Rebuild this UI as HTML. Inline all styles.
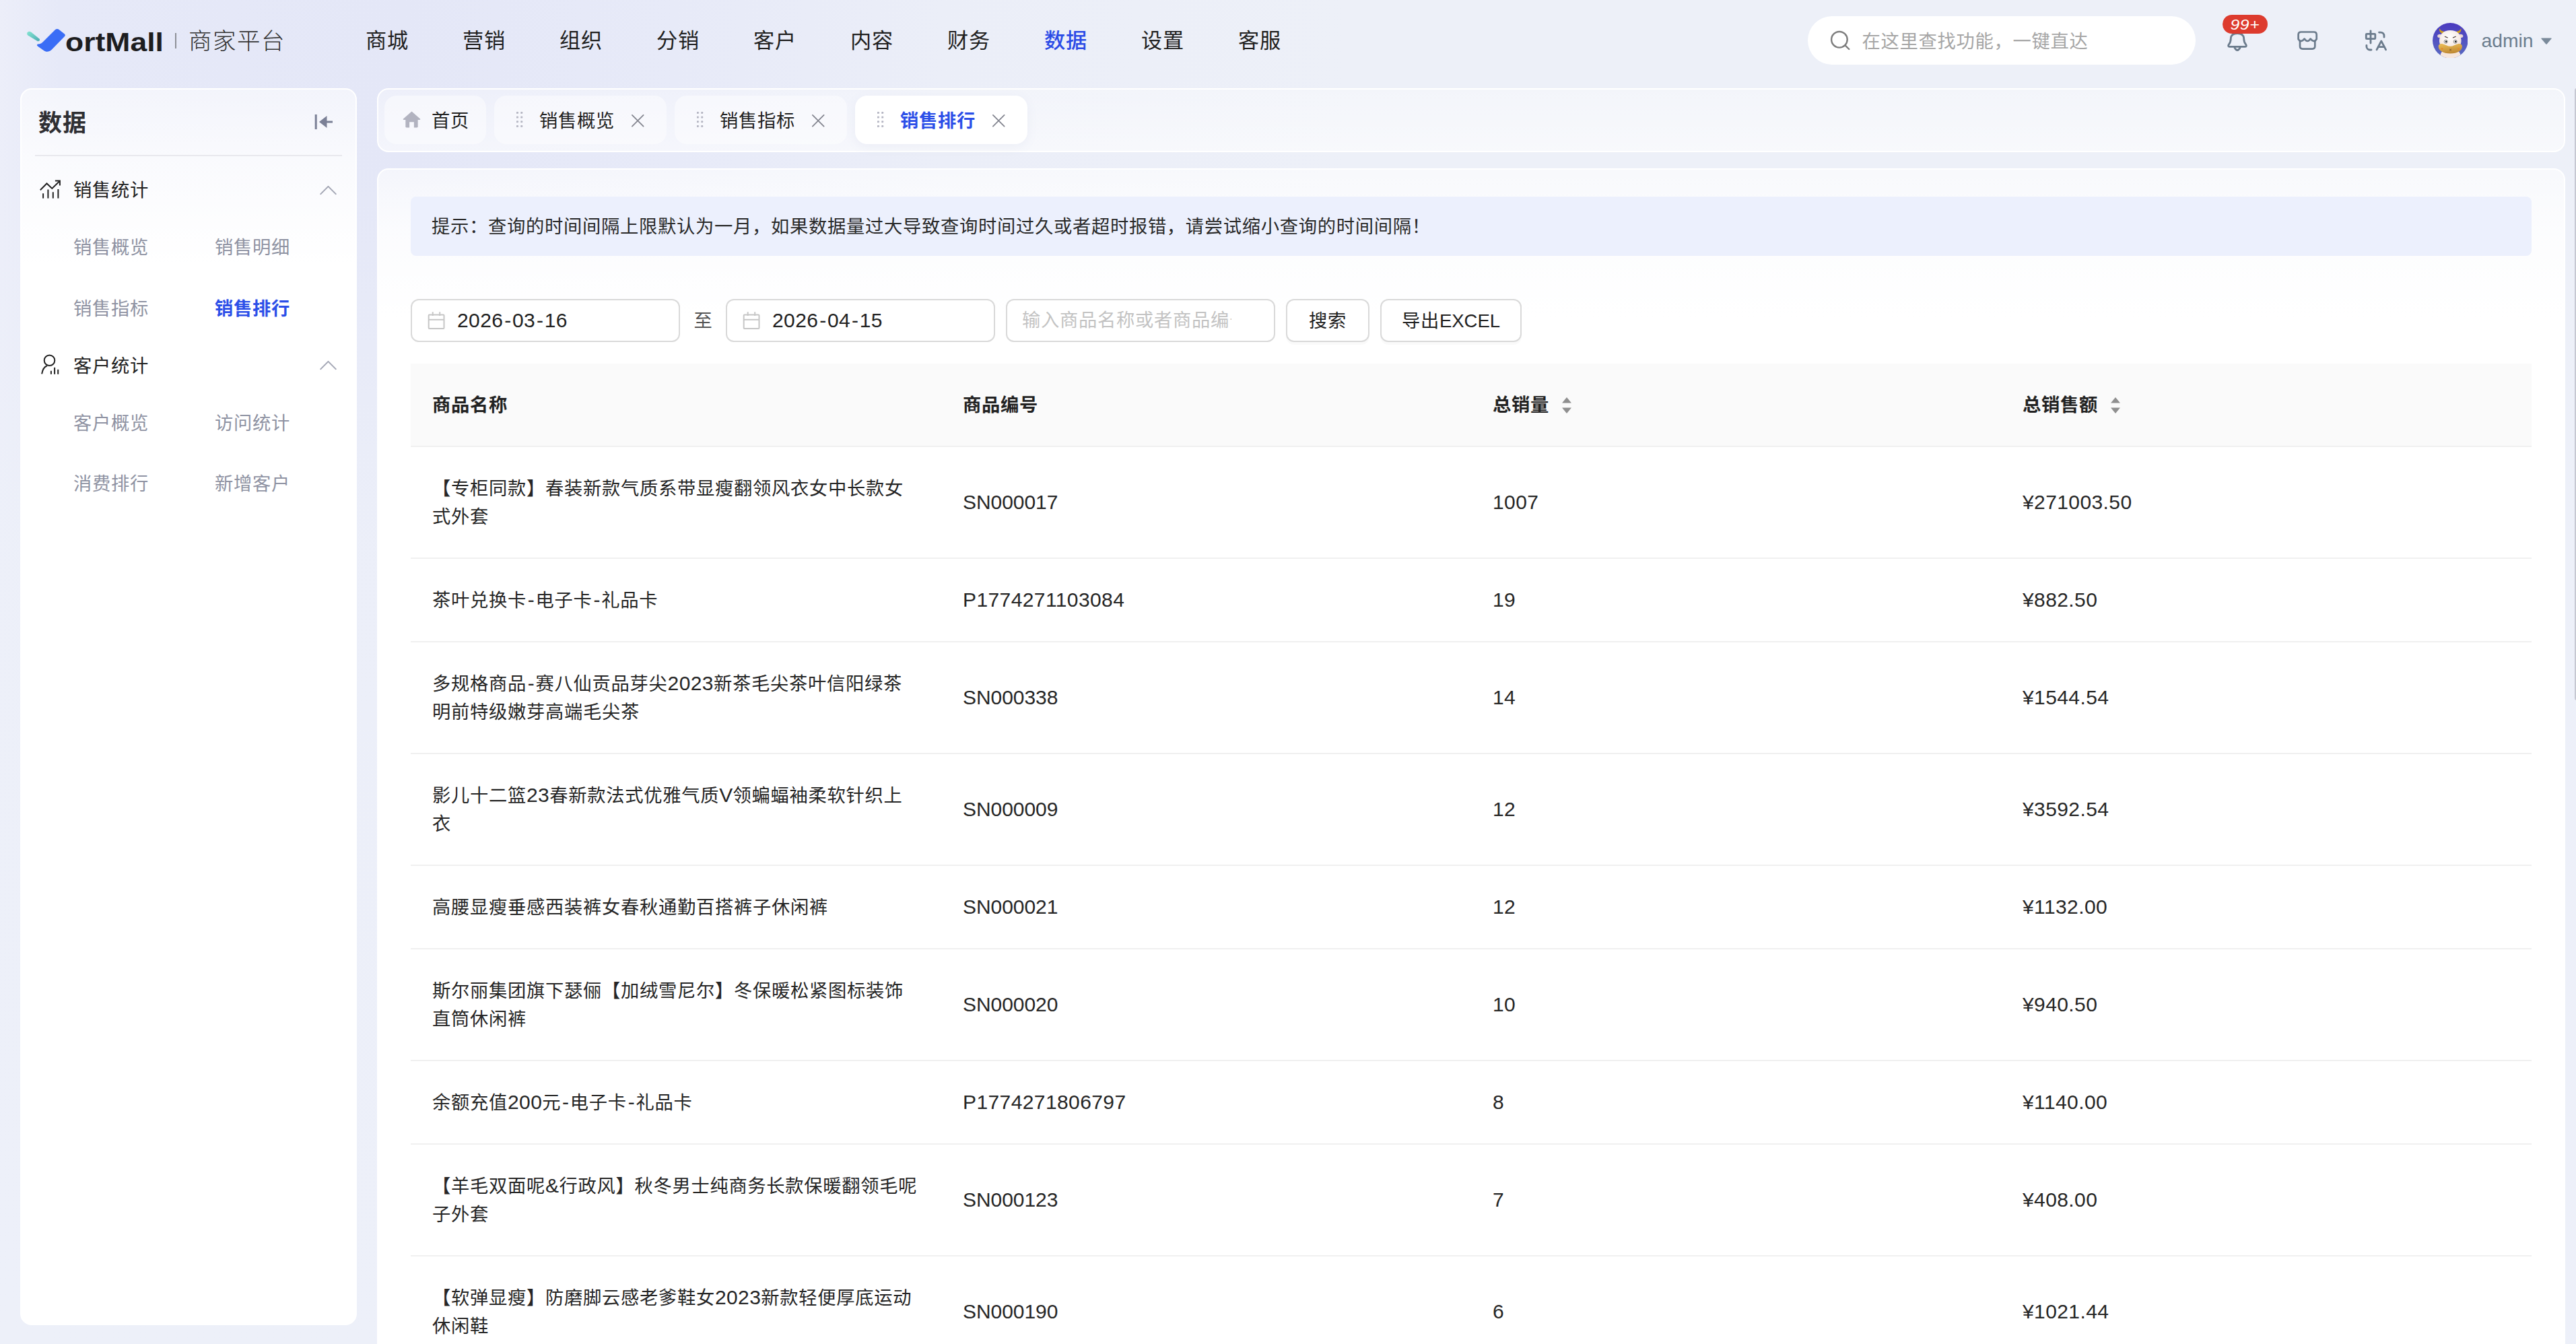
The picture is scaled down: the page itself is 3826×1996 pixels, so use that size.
<!DOCTYPE html>
<html lang="zh-CN">
<head>
<meta charset="utf-8">
<title>销售排行 - 商家平台</title>
<style>
*{box-sizing:border-box;margin:0;padding:0}
html,body{width:3826px;height:1996px;overflow:hidden}
body{position:relative;font-family:"Liberation Sans","Noto Sans CJK SC",sans-serif;color:#222;
background:linear-gradient(180deg,rgba(237,240,249,0) 0,rgba(237,240,249,0) 240px,rgba(237,240,249,.85) 800px,rgba(237,240,249,1) 100%),linear-gradient(90deg,#eceef9 0,#e6e9f8 90px,#e4e7f7 600px,#e7eaf8 1000px,#ebeef8 1400px,#edf0f8 2000px,#edf0f8 100%);}
.abs{position:absolute}
/* header */
#logo-t{left:96.500px;top:33.500px;font-size:39.500px;font-weight:700;line-height:56px;color:#1d1d1f;white-space:nowrap;transform-origin:0 50%;transform:scaleX(1.127)}
#logo-sep{left:260px;top:49px;width:2px;height:23px;background:#8d8f96}
#logo-c{left:280px;top:33px;font-size:34.500px;letter-spacing:1.500px;font-weight:300;line-height:56px;color:#333;white-space:nowrap}
.nav{top:36px;font-size:31.200px;letter-spacing:.800px;line-height:50px;color:#1f1f1f;white-space:nowrap}
.nav.on{color:#2b4be6;font-weight:500}
#search{left:2685px;top:24px;width:576px;height:72px;border-radius:36px;background:#fff}
#search span{position:absolute;left:80.500px;top:18px;font-size:27.300px;letter-spacing:.700px;line-height:40px;color:#a6a6a6;white-space:nowrap}
#badge{left:3301px;top:21.500px;width:67px;height:28.500px;border-radius:14.250px;background:#dd3b2e;color:#fff;font-size:22px;line-height:30px;text-align:center;font-style:italic;letter-spacing:.5px}
#badge span{display:inline-block;transform:scaleX(1.130)}
#admin{left:3685.500px;top:40px;font-size:28.300px;line-height:40px;color:#6b7d8e}
/* panels */
.panel{border:2px solid #fff;border-radius:17px}
#side{left:30px;top:131px;width:500px;height:1837px;background:linear-gradient(180deg,rgba(255,255,255,.55) 0,rgba(255,255,255,.8) 110px,#fff 260px)}
#side-title{left:57px;top:157px;font-size:35px;letter-spacing:1px;font-weight:700;line-height:52px;color:#2f2f33}
#side-div{left:52px;top:230px;width:456px;height:2px;background:#e9e9ee}
.m1{font-size:27.300px;letter-spacing:.700px;line-height:40px;color:#222;white-space:nowrap}
.m2{font-size:27.300px;letter-spacing:.700px;line-height:40px;color:#8f93a3;white-space:nowrap}
.m2.on{color:#2c4fe8;font-weight:700}
#tabs{left:560px;top:131px;width:3250px;height:95px;background:linear-gradient(180deg,rgba(255,255,255,.35),rgba(255,255,255,.6))}
.tab{top:142px;height:71.500px;border-radius:18px;background:rgba(255,255,255,.45);font-size:27.300px;letter-spacing:.700px;line-height:75px;color:#222;white-space:nowrap}
.tab.on{background:#fff;color:#2c4fe8;font-weight:700;box-shadow:0 4px 16px rgba(120,130,180,.08)}
.tab span{position:absolute;top:0}
.tab .dots{top:24px;width:10px;height:24px;background:radial-gradient(circle at 1.500px 1.500px,#b4b5c2 1.400px,transparent 1.800px) 0 0/6.300px 6.670px}
#main{left:560px;top:250px;width:3250px;height:1800px;border-bottom-left-radius:0;border-bottom-right-radius:0;background:linear-gradient(180deg,rgba(255,255,255,.6) 0px,rgba(255,255,255,.85) 90px,#fff 220px)}
#hint{left:610px;top:292px;width:3150px;height:88px;border-radius:8px;background:#ecf0fd;font-size:27.300px;letter-spacing:.700px;line-height:90px;padding-left:31px;color:#2a2a2a;white-space:nowrap}
.inp{top:444px;height:64px;width:400px;border:2px solid #d9d9d9;border-radius:12px;background:#fff;font-size:27.300px;letter-spacing:.700px;line-height:60px;color:#222;white-space:nowrap}
.inp span{position:absolute;top:0}
.num{font-size:30px!important;letter-spacing:.4px!important}
.num.sn{letter-spacing:-.050px!important}
i{font-style:normal;font-size:30px;letter-spacing:0;margin:0 1.800px;line-height:0}
b{font-weight:inherit;font-size:30px;letter-spacing:.4px;line-height:0}
.btn{top:444px;height:64px;border:2px solid #d9d9d9;border-radius:12px;background:#fff;font-size:27.300px;letter-spacing:.700px;line-height:61px;text-align:center;color:#222;box-shadow:0 4px 0 rgba(0,0,0,.02);white-space:nowrap}
/* table */
#thead{left:610px;top:540px;width:3150px;height:124px;background:#fafafa;border-bottom:2px solid #f0f0f0}
.th{top:581px;font-size:27.300px;letter-spacing:.700px;font-weight:700;line-height:42px;color:#222;white-space:nowrap}
.row{left:610px;width:3150px;border-bottom:2px solid #f0f0f0}
.row div{position:absolute;font-size:27.300px;letter-spacing:.700px;line-height:42px;color:#262626;white-space:nowrap}
.c1{left:32px;top:41px}
.c2{left:820px}.c3{left:1607px}.c4{left:2394px}
.r1{height:124px}.r1 .c2,.r1 .c3,.r1 .c4{top:40px}
.r2{height:166px}.r2 .c2,.r2 .c3,.r2 .c4{top:61px}
</style>
</head>
<body>
<!-- HEADER -->
<svg class="abs" style="left:36px;top:38px" width="66" height="44" viewBox="0 0 66 44">
 <defs><linearGradient id="lg1" x1="0" y1="0" x2="1" y2="1"><stop offset="0" stop-color="#86e6d2"/><stop offset="1" stop-color="#4aaab2"/></linearGradient></defs>
 <path d="M4.700 10.200 C6 8.300 8.300 8.200 10 9.500 L22.300 19.500 C24.300 21.200 22 24.200 19.500 22.900 L5.800 14.800 C3.900 13.600 3.700 11.700 4.700 10.200Z" fill="url(#lg1)"/>
 <path d="M45.800 6.200 C47.800 4.600 50 4.600 52 6.200 L59.600 12.300 C61.200 13.600 61.200 14.800 59.800 16.300 L40.500 36 C37 39.200 32.500 39.800 29 37 L19.800 30.500 C18.200 29.200 19 27.800 20.800 27.600 C24 27.400 26 26 28 24Z" fill="#3a6df6"/>
</svg>
<div class="abs" id="logo-t">ortMall</div>
<div class="abs" id="logo-sep"></div>
<div class="abs" id="logo-c">商家平台</div>

<div class="abs nav" style="left:543px">商城</div>
<div class="abs nav" style="left:687px">营销</div>
<div class="abs nav" style="left:831px">组织</div>
<div class="abs nav" style="left:975px">分销</div>
<div class="abs nav" style="left:1119px">客户</div>
<div class="abs nav" style="left:1263px">内容</div>
<div class="abs nav" style="left:1407px">财务</div>
<div class="abs nav on" style="left:1551px">数据</div>
<div class="abs nav" style="left:1695px">设置</div>
<div class="abs nav" style="left:1839px">客服</div>

<div class="abs" id="search">
 <svg class="abs" style="left:32px;top:20px" width="34" height="34" viewBox="0 0 34 34" fill="none" stroke="#7d7d7d" stroke-width="2.400" stroke-linecap="round"><circle cx="14.900" cy="14.800" r="11.800"/><path d="M23.500 23.400 L29.300 29"/></svg>
 <span>在这里查找功能，一键直达</span>
</div>
<!-- bell -->
<svg class="abs" style="left:3303px;top:43px" width="40" height="40" viewBox="0 0 40 40" fill="none" stroke="#6b7b8c" stroke-width="2.800" stroke-linecap="round" stroke-linejoin="round"><path d="M8.500 26.300 C6.300 26.300 6.200 24.600 7.300 23.200 C9.600 20.200 10.300 17.500 10.300 14.500 C10.300 9 14.500 6.500 20 6.500 C25.500 6.500 29.700 9 29.700 14.500 C29.700 17.500 30.400 20.200 32.700 23.200 C33.800 24.600 33.700 26.300 31.500 26.300 Z"/><path d="M16 28 Q20 35 24 28"/></svg>
<div class="abs" id="badge"><span>99+</span></div>
<!-- store -->
<svg class="abs" style="left:3410px;top:44px" width="36" height="34" viewBox="0 0 36 34" fill="none" stroke="#6b7b8c" stroke-width="2.700" stroke-linejoin="round" stroke-linecap="round"><path d="M3.600 14 V7.500 Q3.600 3.500 7.600 3.500 H26.700 Q30.700 3.500 30.700 7.500 V14 Q28.500 17.800 25.800 16.800 Q23.500 16 21.700 13.600 Q19.500 17 17.150 17 Q14.800 17 12.600 13.600 Q10.800 16 8.500 16.800 Q5.800 17.800 3.600 14 Z"/><path d="M6 17 V24.500 Q6 28.600 10 28.600 H24.300 Q28.300 28.600 28.300 24.500 V17"/></svg>
<!-- translate -->
<svg class="abs" style="left:3510px;top:42px" width="38" height="36" viewBox="0 0 38 36" fill="none" stroke="#6b7b8c" stroke-width="2.800" stroke-linecap="round" stroke-linejoin="round"><rect x="4.300" y="8.300" width="13.500" height="7.400" rx="1"/><path d="M11 3.800 V22"/><path d="M23.500 6.100 H26 a5 5 0 0 1 5 5 V13.200"/><path d="M4.900 25.300 V27 a5 5 0 0 0 5 5 H12"/><path d="M20 31.800 L26.800 18.900 L33.600 31.800"/><path d="M22.500 27.600 H31.100"/></svg>
<!-- avatar -->
<svg class="abs" style="left:3612.800px;top:33.700px" width="52.500" height="52.500" viewBox="0 0 52.500 52.500">
 <defs><clipPath id="avc"><circle cx="26.250" cy="26.250" r="26.250"/></clipPath>
 <linearGradient id="avbg" x1="0" y1="0" x2="0" y2="1"><stop offset="0" stop-color="#4a3abf"/><stop offset="1" stop-color="#5a6cc2"/></linearGradient>
 <linearGradient id="avmz" x1="0" y1="0" x2="0.300" y2="1"><stop offset="0" stop-color="#edbf58"/><stop offset="1" stop-color="#c08a34"/></linearGradient>
 <radialGradient id="avhd" cx="0.450" cy="0.350" r="0.750"><stop offset="0" stop-color="#ffffff"/><stop offset="0.700" stop-color="#f6e9e4"/><stop offset="1" stop-color="#e4cfc8"/></radialGradient></defs>
 <circle cx="26.250" cy="26.250" r="26.250" fill="url(#avbg)"/>
 <g clip-path="url(#avc)">
  <path d="M12 55 C10 47 13 42 18 40 H35 C40 42 43 47 41 55 Z" fill="#f6e6dc"/>
  <path d="M16.200 16.200 C11.800 15.600 9.300 12.300 10.200 8 C11.600 11 13.400 12.300 16.800 12.600 Z" fill="#d3a01c"/>
  <path d="M36.300 16.200 C40.700 15.600 43.200 12.300 42.300 8 C40.900 11 39.100 12.300 35.700 12.600 Z" fill="#d3a01c"/>
  <ellipse cx="10.300" cy="19.300" rx="3.200" ry="2.500" fill="#ecd9d4" transform="rotate(-15 10.300 19.300)"/>
  <ellipse cx="42.200" cy="19.300" rx="3.200" ry="2.500" fill="#ecd9d4" transform="rotate(15 42.200 19.300)"/>
  <path d="M26.300 11 C36 11 41.500 16 42.500 25 C43.300 33 38 39.500 26.300 39.500 C14.600 39.500 9.300 33 10.100 25 C11.100 16 16.600 11 26.300 11 Z" fill="url(#avhd)"/>
  <path d="M8.700 35 C8.700 31.500 12 30.700 15 31.200 C19 32 22 34.800 26.300 34.800 C30.600 34.800 33.600 32 37.600 31.200 C40.600 30.700 43.900 31.500 43.900 35 C43.900 41 37 45.500 26.300 45.500 C15.600 45.500 8.700 41 8.700 35 Z" fill="url(#avmz)"/>
  <circle cx="19.600" cy="27.800" r="2.500" fill="#fff" stroke="#444" stroke-width="0.600"/><circle cx="20.100" cy="27.800" r="1.400" fill="#222"/>
  <circle cx="33.700" cy="27.800" r="2.500" fill="#fff" stroke="#444" stroke-width="0.600"/><circle cx="34.200" cy="27.800" r="1.400" fill="#222"/>
  <path d="M18.300 20.300 L22.300 21.900 M34.300 20.300 L30.300 21.900" stroke="#3a2a28" stroke-width="1.100" stroke-linecap="round" fill="none"/>
  <circle cx="14.100" cy="38.400" r="1.300" fill="#e8872a"/><circle cx="38.400" cy="38.400" r="1.300" fill="#e8872a"/>
  <path d="M25.200 38.800 l2.600 2.400 m0 -2.400 l-2.600 2.400" stroke="#5a3420" stroke-width="0.700" fill="none"/>
 </g>
</svg>
<div class="abs" id="admin">admin</div>
<svg class="abs" style="left:3773px;top:55px" width="18" height="12" viewBox="0 0 18 12"><path d="M2 1.500 H16 Q17.200 1.600 16.500 2.600 L9.700 10.600 Q9 11.300 8.300 10.600 L1.500 2.600 Q0.800 1.600 2 1.500 Z" fill="#7a8a9a"/></svg>

<div class="abs" style="left:3824px;top:131px;width:6px;height:909px;border-radius:3px;background:#c6c8d2"></div>
<!-- SIDEBAR -->
<div class="abs panel" id="side"></div>
<div class="abs" id="side-title">数据</div>
<svg class="abs" style="left:466px;top:168px" width="30" height="26" viewBox="0 0 30 26" fill="none" stroke="#7b8096" stroke-width="3" stroke-linecap="butt"><path d="M3.200 2 V24"/><path d="M12 13 H28"/><path d="M8 13 L19.500 4 V22 Z" fill="#7b8096" stroke="none"/></svg>
<div class="abs" id="side-div"></div>

<svg class="abs" style="left:58px;top:266px" width="34" height="32" viewBox="0 0 34 32" fill="none" stroke="#222" stroke-width="2" stroke-linecap="butt" stroke-linejoin="miter"><path d="M1.800 16.200 L11.500 6.500 L19.300 13.900 L30.500 3"/><path d="M23.900 2.600 H30.900 V9.600"/><path d="M6.100 21.300 V28.600 M13.400 15.400 V28.600 M20.800 19.300 V28.600 M28.400 15 V28.600"/></svg>
<div class="abs m1" style="left:109px;top:263px">销售统计</div>
<svg class="abs" style="left:474px;top:275px" width="27" height="15" viewBox="0 0 28 16" fill="none" stroke="#a3a6b4" stroke-width="2.200" stroke-linecap="round" stroke-linejoin="round"><path d="M2 14 L14 2 L26 14"/></svg>
<div class="abs m2" style="left:109px;top:348px">销售概览</div>
<div class="abs m2" style="left:319px;top:348px">销售明细</div>
<div class="abs m2" style="left:109px;top:438.500px">销售指标</div>
<div class="abs m2 on" style="left:319px;top:438.500px">销售排行</div>

<svg class="abs" style="left:58px;top:526px" width="34" height="34" viewBox="0 0 34 34" fill="none" stroke="#222" stroke-width="2" stroke-linecap="butt" stroke-linejoin="round"><circle cx="15.500" cy="9.200" r="7.800"/><path d="M11.800 17.300 C7.500 19 5 23.500 4.100 29.400"/><path d="M17.900 24.800 V29.800 M23.100 19.700 V29.800 M28.200 22.800 V29.800"/></svg>
<div class="abs m1" style="left:109px;top:523.500px">客户统计</div>
<svg class="abs" style="left:474px;top:535px" width="27" height="15" viewBox="0 0 28 16" fill="none" stroke="#a3a6b4" stroke-width="2.200" stroke-linecap="round" stroke-linejoin="round"><path d="M2 14 L14 2 L26 14"/></svg>
<div class="abs m2" style="left:109px;top:608.500px">客户概览</div>
<div class="abs m2" style="left:319px;top:608.500px">访问统计</div>
<div class="abs m2" style="left:109px;top:698.500px">消费排行</div>
<div class="abs m2" style="left:319px;top:698.500px">新增客户</div>

<!-- TABS -->
<div class="abs panel" id="tabs"></div>
<div class="abs tab" style="left:571px;width:151px">
 <svg class="abs" style="left:26.500px;top:22px" width="27" height="27" viewBox="0 0 28 28"><path d="M14 1.500 L27 13 C27.500 13.700 27.200 14.500 26.300 14.500 H23.500 V25 C23.500 26 23 26.500 22 26.500 H17.500 V18 H10.500 V26.500 H6 C5 26.500 4.500 26 4.500 25 V14.500 H1.700 C0.800 14.500 0.500 13.700 1 13 Z" fill="#b2b3c0"/></svg>
 <span style="left:70px">首页</span>
</div>
<div class="abs tab" style="left:734px;width:256px"><span class="dots" style="left:33px"></span><span style="left:67px">销售概览</span>
 <svg class="abs" style="left:202.500px;top:26.500px" width="20.500" height="20.500" viewBox="0 0 22 22" stroke="#83858f" stroke-width="1.900" stroke-linecap="round"><path d="M2 2 L20 20 M20 2 L2 20"/></svg></div>
<div class="abs tab" style="left:1002px;width:256px"><span class="dots" style="left:33px"></span><span style="left:67px">销售指标</span>
 <svg class="abs" style="left:202.500px;top:26.500px" width="20.500" height="20.500" viewBox="0 0 22 22" stroke="#83858f" stroke-width="1.900" stroke-linecap="round"><path d="M2 2 L20 20 M20 2 L2 20"/></svg></div>
<div class="abs tab on" style="left:1270px;width:256px"><span class="dots" style="left:33px"></span><span style="left:67px">销售排行</span>
 <svg class="abs" style="left:202.500px;top:26.500px" width="20.500" height="20.500" viewBox="0 0 22 22" stroke="#83858f" stroke-width="1.900" stroke-linecap="round"><path d="M2 2 L20 20 M20 2 L2 20"/></svg></div>

<!-- MAIN -->
<div class="abs panel" id="main"></div>
<div class="abs" id="hint">提示：查询的时间间隔上限默认为一月，如果数据量过大导致查询时间过久或者超时报错，请尝试缩小查询的时间间隔！</div>

<div class="abs inp" style="left:610px">
 <svg class="abs" style="left:23px;top:17px" width="28" height="28" viewBox="0 0 28 28" fill="none" stroke="#c6c6c6" stroke-width="2"><rect x="1.700" y="4.500" width="22.800" height="20.500" rx="1"/><path d="M1.700 11.800 H24.500 M7.700 0.300 V6 M18.200 0.300 V6"/></svg>
 <span class="num" style="left:67px">2026<i>-</i>03<i>-</i>16</span></div>
<div class="abs" style="left:1030.500px;top:444px;font-size:27.300px;line-height:66px;color:#555">至</div>
<div class="abs inp" style="left:1078px">
 <svg class="abs" style="left:23px;top:17px" width="28" height="28" viewBox="0 0 28 28" fill="none" stroke="#c6c6c6" stroke-width="2"><rect x="1.700" y="4.500" width="22.800" height="20.500" rx="1"/><path d="M1.700 11.800 H24.500 M7.700 0.300 V6 M18.200 0.300 V6"/></svg>
 <span class="num" style="left:67px">2026<i>-</i>04<i>-</i>15</span></div>
<div class="abs inp" style="left:1494px"><span style="left:22px;width:311px;overflow:hidden;color:#c3c3c3;height:59px">输入商品名称或者商品编号</span></div>
<div class="abs btn" style="left:1910px;width:124px">搜索</div>
<div class="abs btn" style="left:2050px;width:210px">导出<span style="font-size:27.500px;letter-spacing:0">EXCEL</span></div>

<div class="abs" id="thead"></div>
<div class="abs th" style="left:642px">商品名称</div>
<div class="abs th" style="left:1430px">商品编号</div>
<div class="abs th" style="left:2217px">总销量</div>
<svg class="abs" style="left:2319px;top:589px" width="16" height="26" viewBox="0 0 16 26"><path d="M8 1 L15 9.500 H1 Z M8 25 L15 16.500 H1 Z" fill="#8f8f8f"/></svg>
<div class="abs th" style="left:3004px">总销售额</div>
<svg class="abs" style="left:3134px;top:589px" width="16" height="26" viewBox="0 0 16 26"><path d="M8 1 L15 9.500 H1 Z M8 25 L15 16.500 H1 Z" fill="#8f8f8f"/></svg>

<div class="abs row r2" style="top:664px"><div class="c1">【专柜同款】春装新款气质系带显瘦翻领风衣女中长款女<br>式外套</div><div class="c2 num sn">SN000017</div><div class="c3 num">1007</div><div class="c4 num">¥271003.50</div></div>
<div class="abs row r1" style="top:830px"><div class="c1">茶叶兑换卡<i>-</i>电子卡<i>-</i>礼品卡</div><div class="c2 num">P1774271103084</div><div class="c3 num">19</div><div class="c4 num">¥882.50</div></div>
<div class="abs row r2" style="top:954px"><div class="c1">多规格商品<i>-</i>赛八仙贡品芽尖<b>2023</b>新茶毛尖茶叶信阳绿茶<br>明前特级嫩芽高端毛尖茶</div><div class="c2 num sn">SN000338</div><div class="c3 num">14</div><div class="c4 num">¥1544.54</div></div>
<div class="abs row r2" style="top:1120px"><div class="c1">影儿十二篮<b>23</b>春新款法式优雅气质<b>V</b>领蝙蝠袖柔软针织上<br>衣</div><div class="c2 num sn">SN000009</div><div class="c3 num">12</div><div class="c4 num">¥3592.54</div></div>
<div class="abs row r1" style="top:1286px"><div class="c1">高腰显瘦垂感西装裤女春秋通勤百搭裤子休闲裤</div><div class="c2 num sn">SN000021</div><div class="c3 num">12</div><div class="c4 num">¥1132.00</div></div>
<div class="abs row r2" style="top:1410px"><div class="c1">斯尔丽集团旗下瑟俪【加绒雪尼尔】冬保暖松紧图标装饰<br>直筒休闲裤</div><div class="c2 num sn">SN000020</div><div class="c3 num">10</div><div class="c4 num">¥940.50</div></div>
<div class="abs row r1" style="top:1576px"><div class="c1">余额充值<b>200</b>元<i>-</i>电子卡<i>-</i>礼品卡</div><div class="c2 num">P1774271806797</div><div class="c3 num">8</div><div class="c4 num">¥1140.00</div></div>
<div class="abs row r2" style="top:1700px"><div class="c1">【羊毛双面呢<b>&amp;</b>行政风】秋冬男士纯商务长款保暖翻领毛呢<br>子外套</div><div class="c2 num sn">SN000123</div><div class="c3 num">7</div><div class="c4 num">¥408.00</div></div>
<div class="abs row r2" style="top:1866px"><div class="c1">【软弹显瘦】防磨脚云感老爹鞋女<b>2023</b>新款轻便厚底运动<br>休闲鞋</div><div class="c2 num sn">SN000190</div><div class="c3 num">6</div><div class="c4 num">¥1021.44</div></div>
</body>
</html>
